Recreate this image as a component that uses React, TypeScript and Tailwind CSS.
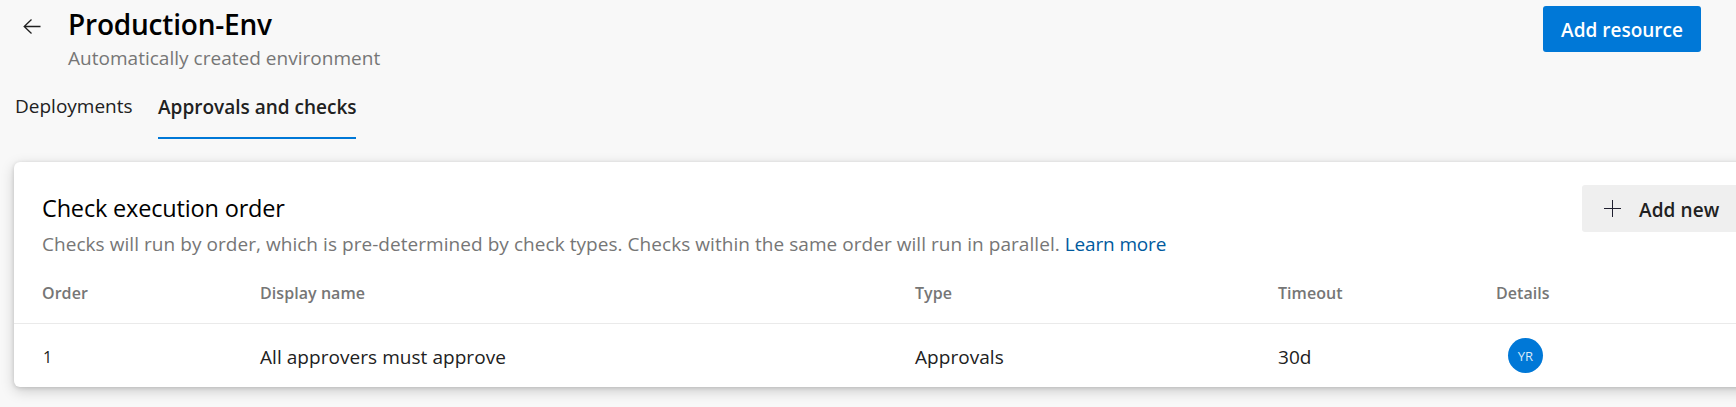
const columns = "grid grid-cols-[218px_655px_363px_219px_1fr] pl-7";

function BackArrow() {
  return (
    <svg width="18" height="16" viewBox="0 0 18 16" fill="none" stroke="#1f1f1f" strokeWidth="1.3">
      <path d="M17.5 8.5H1M8.5 1.5L1.2 8.5L8.5 15.5" />
    </svg>
  );
}

function Plus() {
  return (
    <svg width="17" height="17" viewBox="0 0 17 17" fill="none" stroke="#1f1f2f" strokeWidth="1">
      <path d="M8.5 0V17M0 8.5H17" />
    </svg>
  );
}

function Header() {
  return (
    <header className="flex h-[92px] items-start pt-1.5 pr-[35px] pl-[23px]">
      <div className="mt-[12px] mr-[27px]">
        <BackArrow />
      </div>
      <div className="flex-1">
        <h1 className="text-[28px] leading-9 font-semibold tracking-[-0.2px] text-black">Production-Env</h1>
        <p className="mt-0.5 tracking-[0.02px] text-[#767676]">Automatically created environment</p>
      </div>
      <button className="h-[46px] w-[158px] rounded-[3px] bg-[#0078d7] pt-0.5 font-semibold text-white">
        Add resource
      </button>
    </header>
  );
}

function Tabs() {
  return (
    <nav className="flex h-[70px] items-start gap-[25px] pl-[15px]">
      <a className="w-[118px]">Deployments</a>
      <a className="h-[47px] w-[198px] border-b-2 border-[#0078d7] pt-px font-semibold whitespace-nowrap">
        Approvals and checks
      </a>
    </nav>
  );
}

function ChecksCard() {
  return (
    <section className="-mr-8 ml-3.5 h-[225px] rounded-[6px] bg-white pr-8 shadow-[0_4px_14px_rgba(0,0,0,0.18),0_1px_4px_rgba(0,0,0,0.14)]">
      <div className="flex h-[105px] justify-between pl-7">
        <div className="pt-7">
          <h2 className="text-[23.5px] leading-9 tracking-[-0.17px] text-black">Check execution order</h2>
          <p className="mt-1 tracking-[0.05px] text-[#767676]">
            Checks will run by order, which is pre-determined by check types. Checks within the same order will run in
            parallel. <a className="tracking-[-0.15px] text-[#005a9e]">Learn more</a>
          </p>
        </div>
        <button className="mt-[23px] flex h-[47px] w-[154px] items-center gap-[18px] rounded-l-[3px] bg-[#efefef] pl-[22px] font-semibold tracking-[0.1px]">
          <Plus />
          <span className="pt-0.5">Add new</span>
        </button>
      </div>
      <div className={columns + " h-14 pt-3 text-base leading-7 font-semibold tracking-[0.06px] text-[#767676]"}>
        <div>Order</div>
        <div>Display name</div>
        <div>Type</div>
        <div>Timeout</div>
        <div className="-ml-px">Details</div>
      </div>
      <div className={columns + " -mr-8 h-16 items-center border-t border-[#eaeaea] tracking-[0.05px]"}>
        <div className="pt-0.5 pl-px text-base leading-7">1</div>
        <div className="pt-0.5">All approvers must approve</div>
        <div className="pt-0.5">Approvals</div>
        <div className="pt-0.5">30d</div>
        <div className="ml-[11px] flex size-[35px] items-center justify-center rounded-full bg-[#0078d7] pt-px text-[13px] text-[#d9ebf9]">
          YR
        </div>
      </div>
    </section>
  );
}

export default function App() {
  return (
    <div className="h-[407px] w-full overflow-hidden bg-[#f8f8f8] font-['Open_Sans','Noto_Sans',sans-serif] text-[19px] leading-7 text-[#212121]">
      <Header />
      <Tabs />
      <ChecksCard />
    </div>
  );
}
